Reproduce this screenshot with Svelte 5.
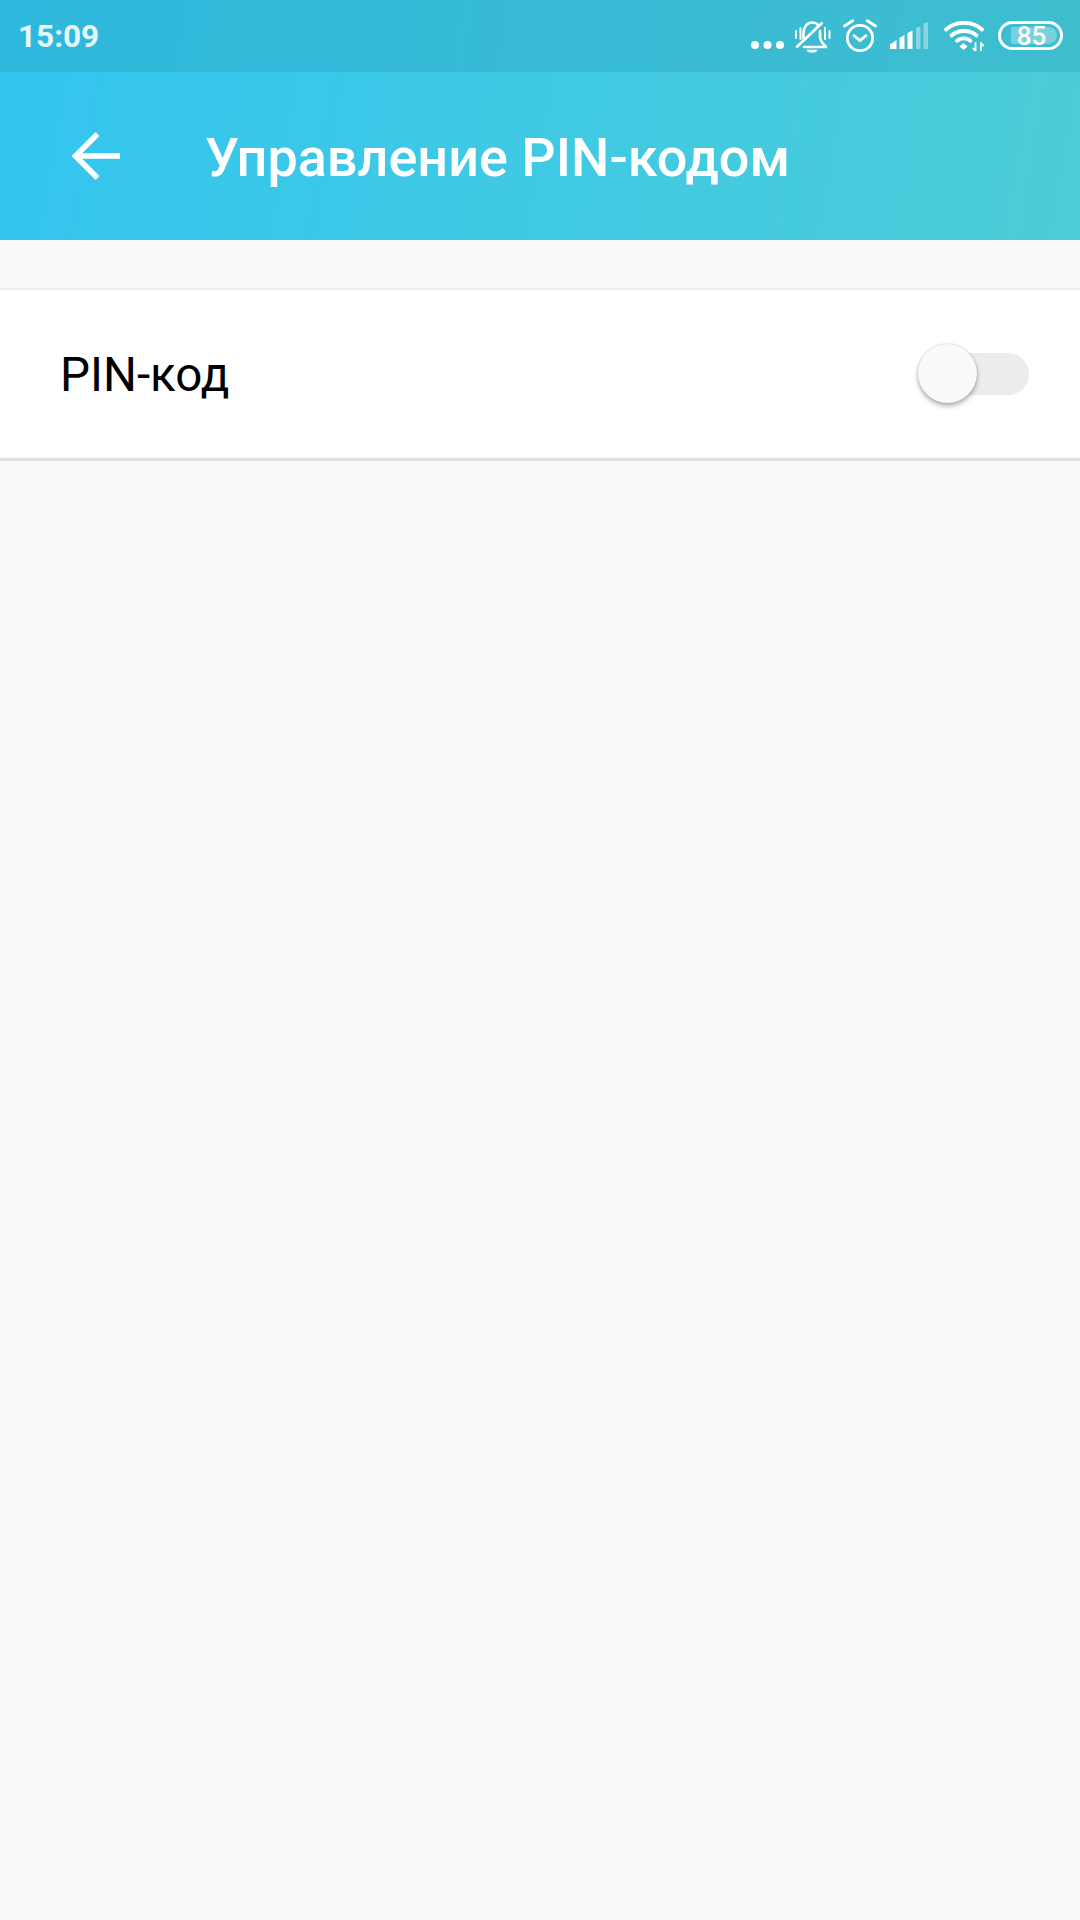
<script>
  const bars = [
    { points: '0,27 0,22.500 6.500,18 6.500,27', o: 1 },
    { points: '9.500,27 9.500,16 14.500,13 14.500,27', o: 1 },
    { points: '17.500,27 17.500,11 22.500,8.500 22.500,27', o: 1 },
    { points: '26,27 26,6 30.500,4 30.500,27', o: 0.4 },
    { points: '33.500,27 33.500,1.500 38,0 38,27', o: 0.4 }
  ];
</script>

<div class="page">
  <header class="head">
    <div class="status">
      <span class="time">15:09</span>
      <div class="icons">
        <svg class="dots" width="33" height="8" viewBox="0 0 33 8" fill="#fff"><circle cx="4" cy="4" r="4"/><circle cx="16.500" cy="4" r="4"/><circle cx="29" cy="4" r="4"/></svg>
        <svg class="bell" width="36" height="33" viewBox="0 0 36 33" fill="none" stroke="#fff" stroke-width="2.600" stroke-linecap="round" stroke-linejoin="round">
          <path d="M8.500 17V12C8.500 6 12 1.500 17 1.500C20 1.500 22 2.500 23.500 4.500"/>
          <path d="M25 10V16C25 20 28 23 31 26H9"/>
          <path d="M2 25.700L26.700 2.300"/>
          <path d="M12.500 29.500C14 31.500 20 31.500 21.500 29.500H12.500Z" fill="#fff" stroke-width="1.500"/>
          <path d="M1 10V17M5.500 7V18M30 7V18M34.500 10V17" stroke-width="2"/>
        </svg>
        <svg class="alarm" width="34" height="34" viewBox="0 0 34 34" fill="none" stroke="#fff" stroke-width="2.800" stroke-linecap="round" stroke-linejoin="round">
          <circle cx="17" cy="19" r="12.700"/>
          <path d="M11 16.700L17 21.700L23 16.700"/>
          <path d="M1.500 7L9.700 1.700M32.500 7L24.300 1.700"/>
        </svg>
        <svg class="signal" width="38" height="27" viewBox="0 0 38 27" fill="#fff">
          {#each bars as b}
            <polygon points={b.points} opacity={b.o}/>
          {/each}
        </svg>
        <svg class="wifi" width="40" height="30" viewBox="0 0 40 30" fill="none" stroke="#fff" stroke-width="3.800" stroke-linecap="round">
          <path d="M2 8.500C12 -0.500 28 -0.500 38 8.500"/>
          <path d="M7.500 14.500C14 8.500 26 8.500 32.500 14.500"/>
          <path d="M13 19.800C16.500 16.500 23 16.500 26.500 19.800"/>
          <path d="M15.500 25.500L19.500 22L23.500 25.500L19.500 29Z" fill="#fff" stroke="none"/>
          <path d="M31.500 22V30M29.300 27.500L31.500 30M37 22V30M37 22L39.200 24.500" stroke-width="1.800"/>
        </svg>
        <div class="battery">
          <span class="fill"></span>
          <span class="level">85</span>
        </div>
      </div>
    </div>
    <div class="bar">
      <svg class="back" width="48" height="48" viewBox="0 0 48 48" fill="none" stroke="#fff" stroke-width="5.500">
        <path d="M48 24H4"/>
        <path d="M25.500 2L3.500 24L25.500 46"/>
      </svg>
      <h1>Управление PIN-кодом</h1>
    </div>
  </header>

  <main class="content">
    <section class="row">
      <span class="label">PIN-код</span>
      <div class="switch"><span class="knob"></span></div>
    </section>
  </main>
</div>

<style>
  :global(body) {
    margin: 0;
    background: #fafafa;
  }
  .page {
    width: 1080px;
    height: 1920px;
    background: #fafafa;
    font-family: Roboto, sans-serif;
    overflow: hidden;
  }
  .head {
    height: 240px;
    display: flex;
    flex-direction: column;
    background: linear-gradient(100deg, #33c5ef 0%, #4ccdd8 100%);
    color: #fff;
  }
  .status {
    height: 72px;
    box-sizing: border-box;
    display: flex;
    align-items: center;
    justify-content: space-between;
    padding: 0 17px 0 18px;
    background: rgba(40, 160, 190, 0.35);
  }
  .time {
    font-size: 31.500px;
    font-weight: 700;
    color: #e6f7fc;
  }
  .icons {
    align-self: stretch;
    display: flex;
    align-items: flex-start;
  }
  .dots { margin-top: 41px; }
  .bell { margin: 21px 0 0 11px; }
  .alarm { margin: 19px 0 0 12px; }
  .signal { margin: 22px 0 0 13px; }
  .wifi { margin: 21px 0 0 16px; }
  .battery {
    position: relative;
    box-sizing: border-box;
    width: 65px;
    height: 29px;
    margin: 21px 0 0 14px;
    border: 3px solid #fff;
    border-radius: 15px;
    display: flex;
    align-items: center;
    justify-content: center;
  }
  .fill {
    position: absolute;
    left: 10px;
    top: 3px;
    bottom: 3px;
    width: 46px;
    border-radius: 2px 9px 9px 2px;
    background: rgba(255, 255, 255, 0.3);
  }
  .level {
    position: relative;
    left: 1px;
    font-size: 26px;
    font-weight: 500;
    line-height: 1;
    color: #fff;
  }
  .bar {
    flex: 1;
    display: flex;
    align-items: center;
    padding-left: 72px;
  }
  .back { flex: none; }
  h1 {
    margin: 3px 0 0 85px;
    font-size: 54px;
    font-weight: 500;
    line-height: 1;
  }
  .content {
    padding-top: 48px;
  }
  .row {
    height: 173px;
    box-sizing: border-box;
    display: flex;
    align-items: center;
    justify-content: space-between;
    padding: 0 51px 0 60px;
    background: #fff;
    border-top: 2px solid #eeeeee;
    border-bottom: 3px solid #e0e0e0;
  }
  .label {
    margin-top: 1px;
    font-size: 47.600px;
    color: #000;
  }
  .switch {
    position: relative;
    width: 108px;
    height: 42px;
    border-radius: 21px;
    background: #ececec;
  }
  .knob {
    position: absolute;
    left: -3px;
    top: -9px;
    width: 59px;
    height: 59px;
    border-radius: 50%;
    background: #fafafa;
    box-shadow: 0 3px 5px rgba(0, 0, 0, 0.3), 0 0 2px rgba(0, 0, 0, 0.2);
  }
</style>
